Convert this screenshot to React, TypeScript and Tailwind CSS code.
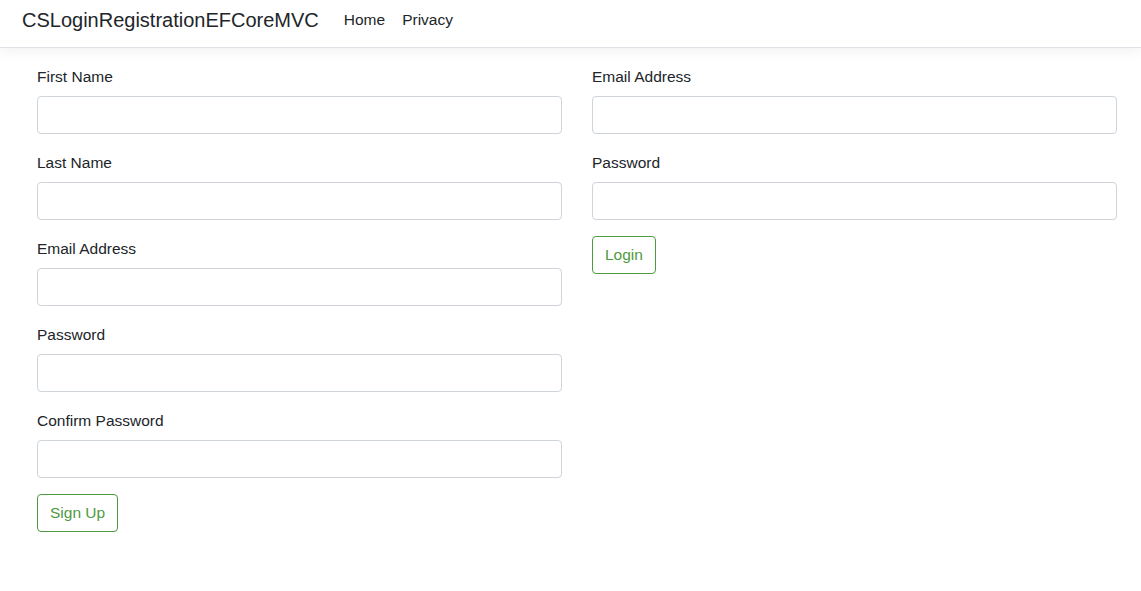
export default function App() {
  const font = { fontFamily: '"Liberation Sans", Arial, sans-serif' };

  const Field = ({ label, type = 'text' }: { label: string; type?: string }) => (
    <div className="mb-4">
      <label className="mb-[6px] block text-[15.5px] leading-[26px] text-[#212529]">{label}</label>
      <input
        type={type}
        className="block h-[38px] w-full rounded-[4px] border border-[#ced4da] bg-white px-3 outline-none"
      />
    </div>
  );

  return (
    <div className="min-h-screen bg-white" style={font}>
      {/* Navbar */}
      <nav className="flex h-[48px] items-start border-b border-[#dee2e6] px-[22px] pt-[5px] shadow-[0_4px_12px_rgba(0,0,0,0.05)]">
        <span className="mr-[25px] text-[20px] leading-[30px] text-[#212529]">
          CSLoginRegistrationEFCoreMVC
        </span>
        <a className="mr-[17px] text-[15.5px] leading-[30px] text-[#212529]">Home</a>
        <a className="text-[15.5px] leading-[30px] text-[#212529]">Privacy</a>
      </nav>

      {/* Forms */}
      <div className="ml-[37px] mt-[16px] flex w-[1080px] gap-[30px]">
        <div className="flex-1">
          <Field label="First Name" />
          <Field label="Last Name" />
          <Field label="Email Address" type="email" />
          <Field label="Password" type="password" />
          <Field label="Confirm Password" type="password" />
          <button className="h-[38px] rounded-[4px] border border-[#4e9a3f] px-3 text-[15.5px] text-[#4e9a3f]">
            Sign Up
          </button>
        </div>
        <div className="flex-1">
          <Field label="Email Address" type="email" />
          <Field label="Password" type="password" />
          <button className="h-[38px] rounded-[4px] border border-[#4e9a3f] px-3 text-[15.5px] text-[#4e9a3f]">
            Login
          </button>
        </div>
      </div>
    </div>
  );
}
